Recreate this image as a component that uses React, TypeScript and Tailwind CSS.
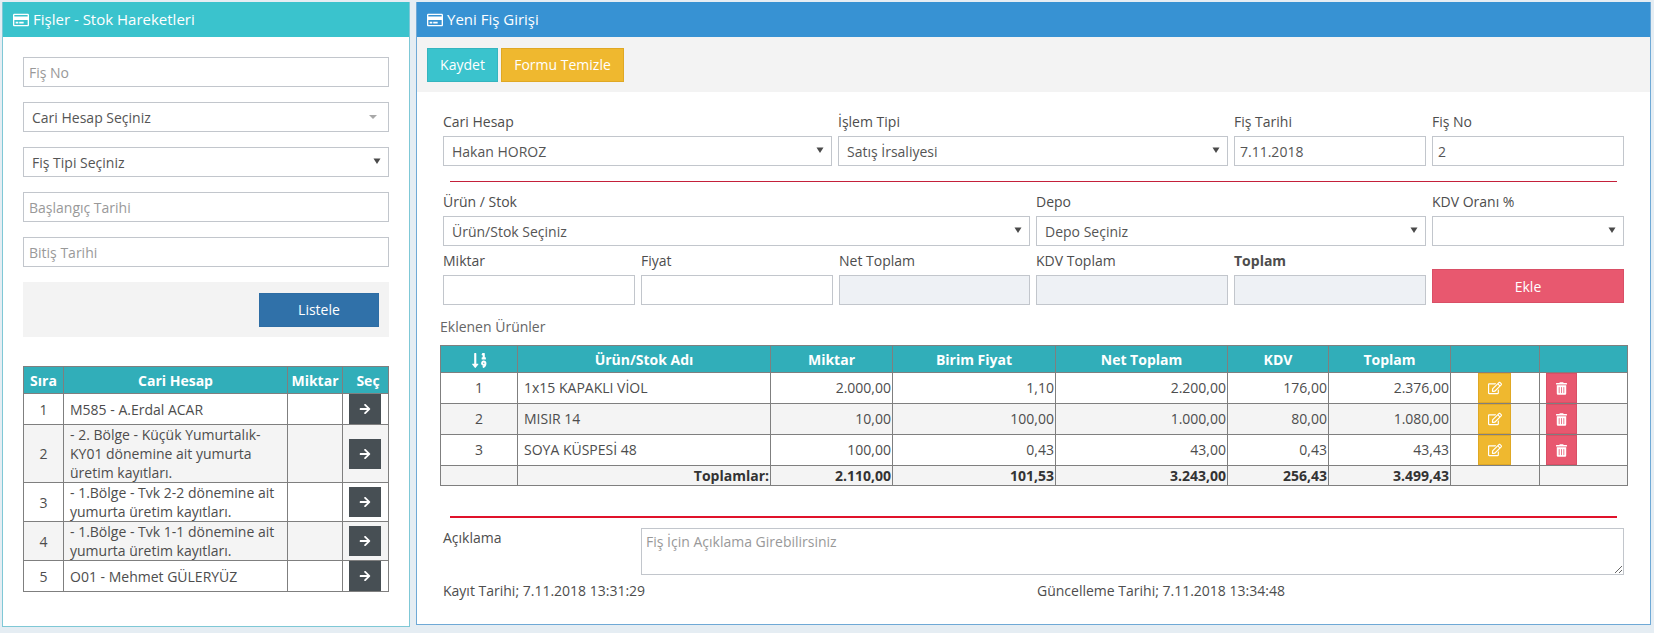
import React from "react";
import { FaRegCreditCard, FaArrowRight, FaRegEdit, FaTrashAlt, FaSortNumericDown } from "react-icons/fa";

const Caret = () => (
  <svg viewBox="0 0 8 8" className="absolute right-[8px] top-[10px] w-[8px] h-[8px] pointer-events-none">
    <path d="M0.5 1.5H7.5L4 7Z" fill="#4a4a4a" />
  </svg>
);

const box = "h-[30px] w-full border border-[#c2c6cc] text-[14px] text-[#555] outline-none placeholder:text-[#999]";

const Sel = ({ text }: { text?: string }) => (
  <div className="relative">
    <div className={`${box} bg-white flex items-center pl-[8px]`}>{text}</div>
    <Caret />
  </div>
);

const Inp = ({ value, placeholder, off }: { value?: string; placeholder?: string; off?: boolean }) => (
  <input
    readOnly
    value={value}
    placeholder={placeholder}
    className={`${box} px-[5px] ${off ? "bg-[#eef1f5]" : "bg-white"}`}
  />
);

const Field = ({ label, bold, className, children }: { label: string; bold?: boolean; className: string; children: React.ReactNode }) => (
  <div className={`flex flex-col gap-[4px] ${className}`}>
    <div className={`h-[20px] leading-[20px] text-[14px] text-[#4d4d4d] ${bold ? "font-bold" : ""}`}>{label}</div>
    {children}
  </div>
);

const PanelHead = ({ title, color }: { title: string; color: string }) => (
  <div className={`h-[35px] shrink-0 flex items-center gap-[4px] pl-[10px] text-white text-[15px] ${color}`}>
    <FaRegCreditCard className="w-[16px] h-[16px]" />
    <span>{title}</span>
  </div>
);

const leftRows: [string, string, string][] = [
  ["1", "M585 - A.Erdal ACAR", "h-[31px]"],
  ["2", "- 2. Bölge - Küçük Yumurtalık-KY01 dönemine ait yumurta üretim kayıtları.", "h-[58px] bg-[#f4f4f4]"],
  ["3", "- 1.Bölge - Tvk 2-2 dönemine ait yumurta üretim kayıtları.", "h-[39px]"],
  ["4", "- 1.Bölge - Tvk 1-1 dönemine ait yumurta üretim kayıtları.", "h-[39px] bg-[#f4f4f4]"],
  ["5", "O01 - Mehmet GÜLERYÜZ", "h-[31px]"],
];

const items = [
  ["1", "1x15 KAPAKLI VİOL", "2.000,00", "1,10", "2.200,00", "176,00", "2.376,00"],
  ["2", "MISIR 14", "10,00", "100,00", "1.000,00", "80,00", "1.080,00"],
  ["3", "SOYA KÜSPESİ 48", "100,00", "0,43", "43,00", "0,43", "43,43"],
];

const cell = "border border-[#7f7f7f] p-0";
const th = `${cell} font-bold text-white text-center`;

export default function App() {
  return (
    <div className="w-[1654px] h-[633px] overflow-hidden bg-[#e5edf3] flex gap-[6px] pl-[2px] pt-[2px] font-['Open_Sans',sans-serif] text-[14px] text-[#4d4d4d]">
      <div className="w-[408px] h-[625px] shrink-0 bg-white border border-t-0 border-[#7fc8d6] flex flex-col">
        <PanelHead title="Fişler - Stok Hareketleri" color="bg-[#3ac3cd]" />
        <div className="flex flex-col gap-[15px] pl-[20px] pr-[20px] pt-[20px]">
          <Inp placeholder="Fiş No" />
          <div className="relative">
            <div className={`${box} bg-white flex items-center pl-[8px]`}>Cari Hesap Seçiniz</div>
            <svg viewBox="0 0 8 4" className="absolute right-[12px] top-[13px] w-[8px] h-[4px]">
              <path d="M0 0H8L4 4Z" fill="#a8a8a8" />
            </svg>
          </div>
          <Sel text="Fiş Tipi Seçiniz" />
          <Inp placeholder="Başlangıç Tarihi" />
          <Inp placeholder="Bitiş Tarihi" />
          <div className="h-[55px] bg-[#f3f3f3] flex items-center justify-end pr-[10px]">
            <button className="w-[120px] h-[34px] bg-[#3071a9] text-white text-[14px] border border-[#2e6da4]">Listele</button>
          </div>
        </div>
        <table className="table-fixed border-collapse ml-[20px] mt-[29px] w-[365px] text-[14px] leading-[19px]">
          <colgroup>
            <col className="w-[40px]" />
            <col className="w-[224px]" />
            <col className="w-[55px]" />
            <col className="w-[46px]" />
          </colgroup>
          <thead>
            <tr className="h-[27px] bg-[#31aeb9]">
              <th className={th}>Sıra</th>
              <th className={th}>Cari Hesap</th>
              <th className={th}>Miktar</th>
              <th className={`${th} pl-[5px]`}>Seç</th>
            </tr>
          </thead>
          <tbody>
            {leftRows.map(([n, t, cls]) => (
              <tr key={n} className={cls}>
                <td className={`${cell} text-center`}>{n}</td>
                <td className={`${cell} px-[6px]`}>{t}</td>
                <td className={cell}></td>
                <td className={`${cell} pl-[6px]`}>
                  <div className="w-[32px] h-[30px] bg-[#474f54] flex items-center justify-center text-white">
                    <FaArrowRight className="w-[12px] h-[12px]" />
                  </div>
                </td>
              </tr>
            ))}
          </tbody>
        </table>
      </div>

      <div className="w-[1235px] h-[623px] shrink-0 bg-white border border-t-0 border-[#6fa9d6] flex flex-col">
        <PanelHead title="Yeni Fiş Girişi" color="bg-[#3792d3]" />
        <div className="h-[55px] shrink-0 bg-[#f3f3f3] flex items-center gap-[3px] pl-[10px]">
          <button className="w-[71px] h-[34px] bg-[#3ac3cd] border border-[#35b5bf] text-white text-[14px]">Kaydet</button>
          <button className="w-[123px] h-[34px] bg-[#efb82f] border border-[#e0a824] text-white text-[14px]">Formu Temizle</button>
        </div>

        <div className="pl-[26px] pt-[20px] flex flex-col w-[1207px]">
          <div className="flex gap-[6px]">
            <Field label="Cari Hesap" className="w-[389px]"><Sel text="Hakan HOROZ" /></Field>
            <Field label="İşlem Tipi" className="w-[390px]"><Sel text="Satış İrsaliyesi" /></Field>
            <Field label="Fiş Tarihi" className="w-[192px]"><Inp value="7.11.2018" /></Field>
            <Field label="Fiş No" className="w-[192px]"><Inp value="2" /></Field>
          </div>
          <div className="h-[1px] bg-[#c4203a] ml-[7px] mr-[7px] mt-[15px]"></div>
          <div className="flex gap-[6px] mt-[10px]">
            <Field label="Ürün / Stok" className="w-[587px]"><Sel text="Ürün/Stok Seçiniz" /></Field>
            <Field label="Depo" className="w-[390px]"><Sel text="Depo Seçiniz" /></Field>
            <Field label="KDV Oranı %" className="w-[192px]"><Sel /></Field>
          </div>
          <div className="flex gap-[6px] mt-[5px] items-start">
            <Field label="Miktar" className="w-[192px]"><Inp /></Field>
            <Field label="Fiyat" className="w-[192px]"><Inp /></Field>
            <Field label="Net Toplam" className="w-[191px]"><Inp off /></Field>
            <Field label="KDV Toplam" className="w-[192px]"><Inp off /></Field>
            <Field label="Toplam" bold className="w-[192px]"><Inp off /></Field>
            <button className="w-[192px] h-[34px] mt-[18px] bg-[#e8586f] border border-[#d94f66] text-white text-[14px]">Ekle</button>
          </div>
        </div>

        <div className="ml-[23px] mt-[12px] h-[20px] leading-[20px] text-[#666]">Eklenen Ürünler</div>
        <table className="table-fixed border-collapse ml-[23px] mt-[8px] w-[1187px] text-[14px] leading-[19px]">
          <colgroup>
            <col className="w-[77px]" />
            <col className="w-[253px]" />
            <col className="w-[122px]" />
            <col className="w-[163px]" />
            <col className="w-[172px]" />
            <col className="w-[101px]" />
            <col className="w-[122px]" />
            <col className="w-[89px]" />
            <col className="w-[88px]" />
          </colgroup>
          <thead>
            <tr className="h-[27px] bg-[#31aeb9]">
              <th className={th}>
                <FaSortNumericDown className="inline-block w-[17px] h-[17px]" />
              </th>
              <th className={th}>Ürün/Stok Adı</th>
              <th className={th}>Miktar</th>
              <th className={th}>Birim Fiyat</th>
              <th className={th}>Net Toplam</th>
              <th className={th}>KDV</th>
              <th className={th}>Toplam</th>
              <th className={th}></th>
              <th className={th}></th>
            </tr>
          </thead>
          <tbody>
            {items.map((r, i) => (
              <tr key={r[0]} className={`h-[31px] ${i === 1 ? "bg-[#f4f4f4]" : ""}`}>
                <td className={`${cell} text-center pb-[2px]`}>{r[0]}</td>
                <td className={`${cell} pl-[6px] pb-[2px]`}>{r[1]}</td>
                {r.slice(2).map((v, j) => (
                  <td key={j} className={`${cell} text-right pr-[1px] pb-[2px]`}>{v}</td>
                ))}
                <td className={`${cell} pl-[27px]`}>
                  <div className="w-[33px] h-[30px] bg-[#efb82f] border border-[#e0a824] flex items-center justify-center text-white">
                    <FaRegEdit className="w-[14px] h-[14px]" />
                  </div>
                </td>
                <td className={`${cell} pl-[6px]`}>
                  <div className="w-[31px] h-[30px] bg-[#e8586f] border border-[#d94f66] flex items-center justify-center text-white">
                    <FaTrashAlt className="w-[11px] h-[13px]" />
                  </div>
                </td>
              </tr>
            ))}
            <tr className="h-[20px] bg-[#f4f4f4] font-bold text-[#333]">
              <td className={cell}></td>
              <td className={`${cell} text-right pr-[1px]`}>Toplamlar:</td>
              <td className={`${cell} text-right pr-[1px]`}>2.110,00</td>
              <td className={`${cell} text-right pr-[1px]`}>101,53</td>
              <td className={`${cell} text-right pr-[1px]`}>3.243,00</td>
              <td className={`${cell} text-right pr-[1px]`}>256,43</td>
              <td className={`${cell} text-right pr-[1px]`}>3.499,43</td>
              <td className={cell}></td>
              <td className={cell}></td>
            </tr>
          </tbody>
        </table>

        <div className="h-[2px] bg-[#e0122b] ml-[33px] mr-[33px] mt-[30px] shrink-0"></div>
        <div className="flex pl-[26px] mt-[10px]">
          <div className="w-[198px] leading-[20px]">Açıklama</div>
          <textarea
            readOnly
            placeholder="Fiş İçin Açıklama Girebilirsiniz"
            className="w-[983px] h-[47px] border border-[#c2c6cc] px-[4px] py-[2px] text-[14px] outline-none placeholder:text-[#999]"
          />
        </div>
        <div className="flex pl-[26px] mt-[6px] leading-[20px]">
          <div className="w-[594px]">Kayıt Tarihi; 7.11.2018 13:31:29</div>
          <div>Güncelleme Tarihi; 7.11.2018 13:34:48</div>
        </div>
      </div>
    </div>
  );
}
